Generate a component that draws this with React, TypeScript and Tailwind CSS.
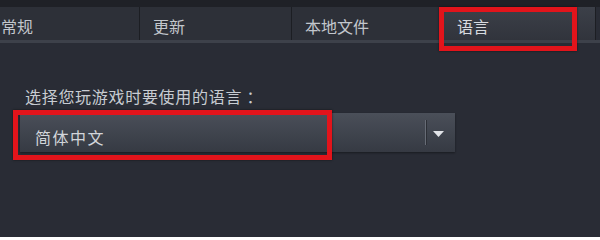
// Steam-style game properties: language tab

const tabs = ['常规', '更新', '本地文件', '语言'];

function Tab({ label, active }: { label: string; active: boolean }) {
  return (
    <div
      className={`flex w-[152px] shrink-0 items-start border-r border-[#1c1e23] pl-[13px] pt-[9px] text-[16px] leading-[20px] ${
        active ? 'bg-gradient-to-b from-[#3c4049] to-[#31343c] text-[#d8dbe0]' : 'bg-[#2d3038] text-[#c2c6cc]'
      }`}
    >
      {label}
    </div>
  );
}

export default function App() {
  return (
    <div className="relative h-[237px] w-[600px] overflow-hidden bg-[#292c35] font-['Noto_Sans_CJK_SC','Noto_Sans',sans-serif]">
      {/* Top strip */}
      <div className="h-[7px] bg-[#1f2127]" />

      {/* Tabs */}
      <div className="-ml-[12px] flex h-[36px] border-b-[3px] border-[#3d414a]">
        {tabs.map((t) => (
          <Tab key={t} label={t} active={t === '语言'} />
        ))}
      </div>

      {/* Content */}
      <div className="pl-[25px] pt-[43px]">
        <p className="text-[16px] leading-[20px] tracking-[0.7px] text-[#c8ccd2]">选择您玩游戏时要使用的语言 ：</p>
        <div className="-ml-[5px] mt-[7px] flex h-[39px] w-[435px] items-center bg-gradient-to-b from-[#4a4f59] to-[#363a43] shadow-[0_1px_2px_rgba(0,0,0,0.4)]">
          <span className="flex-1 pl-[15px] pt-[8px] text-[16px] leading-[20px] tracking-[1.5px] text-[#d2d5da]">简体中文</span>
          <div className="h-[25px] w-[2px] border-r border-[#2c2f36] bg-[#676c76]" />
          <div className="flex w-[28px] items-center pl-[6px] pt-[2px]">
            <svg width="11" height="6" viewBox="0 0 11 6">
              <path d="M0 0 L11 0 L5.5 6 Z" fill="#e2e4e8" />
            </svg>
          </div>
        </div>
      </div>

      {/* Red annotation boxes */}
      <div className="pointer-events-none absolute left-[439px] top-[7px] h-[44px] w-[138px] border-[5px] border-[#e2141b] shadow-[0_0_2px_rgba(0,0,0,0.6)]" />
      <div className="pointer-events-none absolute left-[13px] top-[110px] h-[50px] w-[319px] border-[5px] border-[#e2141b] shadow-[0_0_2px_rgba(0,0,0,0.6)]" />
    </div>
  );
}
